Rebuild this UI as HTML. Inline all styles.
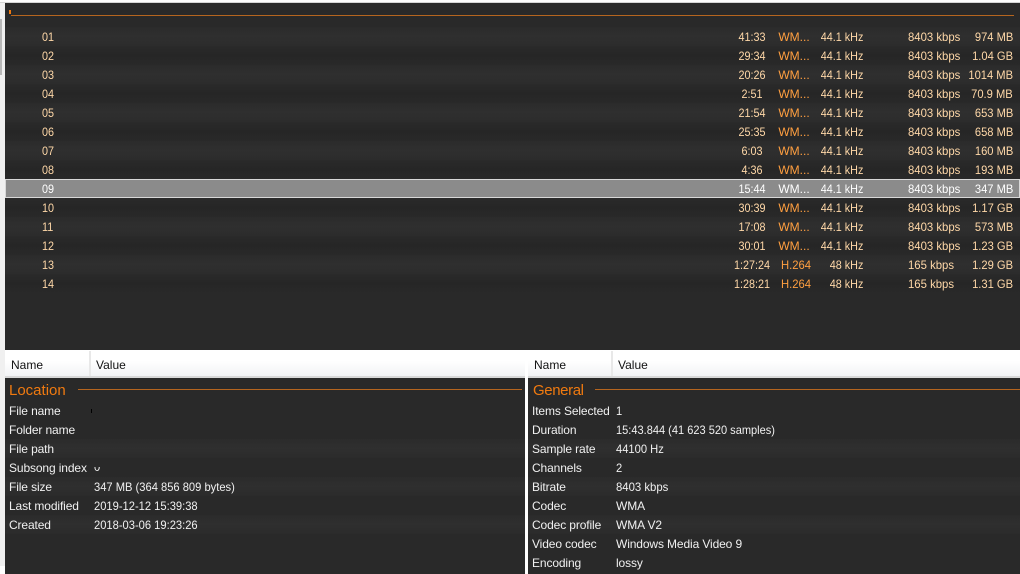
<!DOCTYPE html>
<html><head><meta charset="utf-8">
<style>
html,body{margin:0;padding:0;background:#f0f0f0;}
body{position:relative;width:1020px;height:574px;overflow:hidden;font:12px/19px "Liberation Sans",sans-serif;color:#ffd8a8;}
div,span{position:absolute;white-space:nowrap;}
#top{left:5px;top:3px;width:1015px;height:347px;background:#292929;}
.r{left:5px;width:1015px;height:19px;background:linear-gradient(#2b2b2b,#2f2f2f 50%,#2c2c2c);}
.r.e{background:linear-gradient(#2a2a2a,#262626 50%,#292929);}
.r.s{background:#8b8b8b;box-sizing:border-box;height:19px;border:1px solid #d8d8d8;color:#fff;}
.r span{top:1px;}
.s span{top:0;}
.n{left:37px;transform:scaleX(.9);transform-origin:0 50%;}
.d{left:747px;transform:translateX(-50%) scaleX(.9);}
.c{left:789px;transform:translateX(-50%);color:#ff9f40;}
.r .c2{left:791px;transform:translateX(-50%) scaleX(.94);}
.s .c{color:#fff;}
.f{right:157px;transform:scaleX(.9);transform-origin:100% 50%;}
.b{left:903px;transform:scaleX(.945);transform-origin:0 50%;}
.z{right:7px;transform:scaleX(.93);transform-origin:100% 50%;}
.h{top:351px;height:25px;background:linear-gradient(#fff 0,#fff 40%,#f2f3f5);border-bottom:2px solid #d8d8d8;box-sizing:content-box;color:#111;line-height:28px;}
.sep{top:351px;width:2px;height:25px;background:#e8e8e8;}
.p{top:378px;height:196px;background:#292929;color:#f0f0f0;}
.t{font-size:15px;color:#f07a10;top:381px;line-height:19px;}
.l{height:1px;background:#b5651f;}
.q{height:19px;background:linear-gradient(#2b2b2b,#2f2f2f 50%,#2b2b2b);}
.w{color:#f0f0f0;margin-top:1px;transform:scaleX(.93);transform-origin:0 50%;}
.k{letter-spacing:-.12px;transform:none;}
</style></head><body>
<div style="left:0;top:0;width:1020px;height:2px;background:#fbfbfb"></div>
<div style="left:0;top:2px;width:1020px;height:1px;background:#d4d4d4"></div>
<div style="left:0;top:19px;width:2px;height:56px;background:#b8b8b8"></div>
<div id="top"></div>
<div style="left:9px;top:10px;width:2px;height:4px;background:#f07a10"></div>
<div style="left:11px;top:15px;width:1003px;height:1px;background:#b5651f"></div>

<div class="r" style="top:27px"><span class="n">01</span><span class="d">41:33</span><span class="c">WM...</span><span class="f">44.1 kHz</span><span class="b">8403 kbps</span><span class="z">974 MB</span></div>
<div class="r e" style="top:46px"><span class="n">02</span><span class="d">29:34</span><span class="c">WM...</span><span class="f">44.1 kHz</span><span class="b">8403 kbps</span><span class="z">1.04 GB</span></div>
<div class="r" style="top:65px"><span class="n">03</span><span class="d">20:26</span><span class="c">WM...</span><span class="f">44.1 kHz</span><span class="b">8403 kbps</span><span class="z">1014 MB</span></div>
<div class="r e" style="top:84px"><span class="n">04</span><span class="d">2:51</span><span class="c">WM...</span><span class="f">44.1 kHz</span><span class="b">8403 kbps</span><span class="z">70.9 MB</span></div>
<div class="r" style="top:103px"><span class="n">05</span><span class="d">21:54</span><span class="c">WM...</span><span class="f">44.1 kHz</span><span class="b">8403 kbps</span><span class="z">653 MB</span></div>
<div class="r e" style="top:122px"><span class="n">06</span><span class="d">25:35</span><span class="c">WM...</span><span class="f">44.1 kHz</span><span class="b">8403 kbps</span><span class="z">658 MB</span></div>
<div class="r" style="top:141px"><span class="n">07</span><span class="d">6:03</span><span class="c">WM...</span><span class="f">44.1 kHz</span><span class="b">8403 kbps</span><span class="z">160 MB</span></div>
<div class="r e" style="top:160px"><span class="n">08</span><span class="d">4:36</span><span class="c">WM...</span><span class="f">44.1 kHz</span><span class="b">8403 kbps</span><span class="z">193 MB</span></div>
<div class="r s" style="top:179px"><span class="n" style="left:36px">09</span><span class="d" style="left:746px">15:44</span><span class="c" style="left:788px">WM...</span><span class="f" style="right:156px">44.1 kHz</span><span class="b" style="left:902px">8403 kbps</span><span class="z" style="right:6px">347 MB</span></div>
<div class="r e" style="top:198px"><span class="n">10</span><span class="d">30:39</span><span class="c">WM...</span><span class="f">44.1 kHz</span><span class="b">8403 kbps</span><span class="z">1.17 GB</span></div>
<div class="r" style="top:217px"><span class="n">11</span><span class="d">17:08</span><span class="c">WM...</span><span class="f">44.1 kHz</span><span class="b">8403 kbps</span><span class="z">573 MB</span></div>
<div class="r e" style="top:236px"><span class="n">12</span><span class="d">30:01</span><span class="c">WM...</span><span class="f">44.1 kHz</span><span class="b">8403 kbps</span><span class="z">1.23 GB</span></div>
<div class="r" style="top:255px"><span class="n">13</span><span class="d">1:27:24</span><span class="c c2">H.264</span><span class="f">48 kHz</span><span class="b">165 kbps</span><span class="z">1.29 GB</span></div>
<div class="r e" style="top:274px"><span class="n">14</span><span class="d">1:28:21</span><span class="c c2">H.264</span><span class="f">48 kHz</span><span class="b">165 kbps</span><span class="z">1.31 GB</span></div>

<div style="left:0;top:350px;width:1020px;height:224px;background:#fff"></div>
<div style="left:0;top:350px;width:5px;height:216px;background:#f0f0f0"></div>
<div class="h" style="left:5px;width:520px"><span style="left:6px">Name</span><span style="left:91px">Value</span></div>
<div class="sep" style="left:89px"></div>
<div class="h" style="left:528px;width:492px"><span style="left:6px">Name</span><span style="left:90px">Value</span></div>
<div class="sep" style="left:611px"></div>

<div class="p" style="left:5px;width:520px"></div>
<div class="p" style="left:528px;width:492px"></div>
<div class="t" style="left:9px">Location</div>
<div class="l" style="left:78px;top:389px;width:444px"></div>
<div class="t" style="left:533px;letter-spacing:-.4px">General</div>
<div class="l" style="left:595px;top:389px;width:425px"></div>

<div class="q" style="left:5px;top:439px;width:520px"></div>
<div class="q" style="left:5px;top:477px;width:520px"></div>
<div class="q" style="left:5px;top:515px;width:520px"></div>
<div class="q" style="left:528px;top:439px;width:492px"></div>
<div class="q" style="left:528px;top:477px;width:492px"></div>
<div class="q" style="left:528px;top:515px;width:492px"></div>

<div class="w k" style="left:9px;top:401px">File name</div>
<div style="left:91px;top:409px;width:1px;height:4px;background:#000"></div>
<div class="w k" style="left:9px;top:420px">Folder name</div>
<div class="w k" style="left:9px;top:439px">File path</div>
<div class="w k" style="left:9px;top:458px">Subsong index</div>
<div style="left:94px;top:467px;width:7px;height:6px;overflow:hidden"><span class="w" style="left:0;top:-9px;margin:0">0</span></div>
<div class="w k" style="left:9px;top:477px">File size</div><div class="w" style="left:94px;top:477px">347 MB (364 856 809 bytes)</div>
<div class="w k" style="left:9px;top:496px">Last modified</div><div class="w" style="left:94px;top:496px">2019-12-12 15:39:38</div>
<div class="w k" style="left:9px;top:515px">Created</div><div class="w" style="left:94px;top:515px">2018-03-06 19:23:26</div>

<div class="w k" style="left:532px;top:401px">Items Selected</div><div class="w" style="left:616px;top:401px">1</div>
<div class="w k" style="left:532px;top:420px">Duration</div><div class="w" style="left:616px;top:420px;transform:scaleX(.92)">15:43.844 (41 623 520 samples)</div>
<div class="w k" style="left:532px;top:439px">Sample rate</div><div class="w" style="left:616px;top:439px">44100 Hz</div>
<div class="w k" style="left:532px;top:458px">Channels</div><div class="w" style="left:616px;top:458px">2</div>
<div class="w k" style="left:532px;top:477px">Bitrate</div><div class="w" style="left:616px;top:477px;transform:scaleX(.945)">8403 kbps</div>
<div class="w k" style="left:532px;top:496px">Codec</div><div class="w k" style="left:616px;top:496px">WMA</div>
<div class="w k" style="left:532px;top:515px">Codec profile</div><div class="w k" style="left:616px;top:515px">WMA V2</div>
<div class="w k" style="left:532px;top:534px">Video codec</div><div class="w k" style="left:616px;top:534px">Windows Media Video 9</div>
<div class="w k" style="left:532px;top:553px">Encoding</div><div class="w k" style="left:616px;top:553px">lossy</div>
</body></html>
